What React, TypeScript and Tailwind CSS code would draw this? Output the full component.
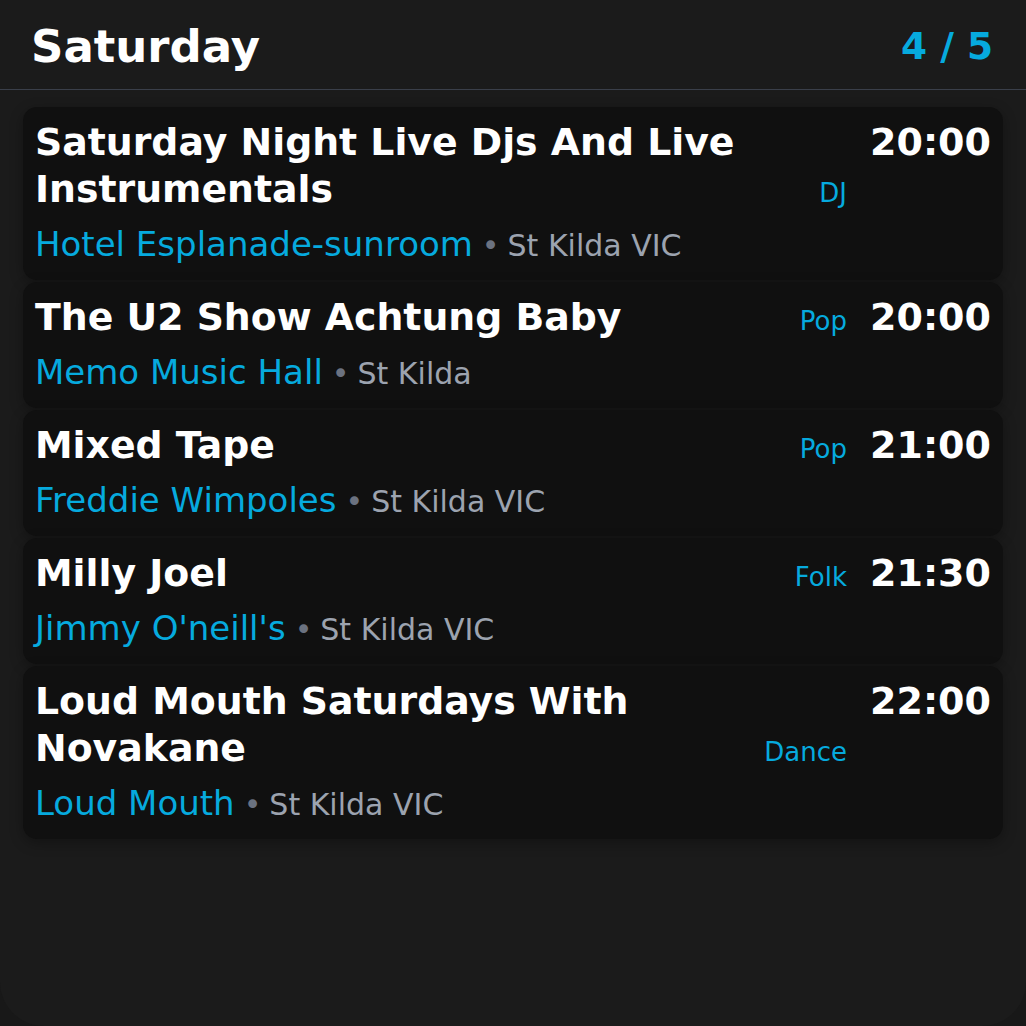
const events = [
  { title: 'Saturday Night Live Djs And Live Instrumentals', venue: 'Hotel Esplanade-sunroom', suburb: 'St Kilda VIC', genre: 'DJ', time: '20:00' },
  { title: 'The U2 Show Achtung Baby', venue: 'Memo Music Hall', suburb: 'St Kilda', genre: 'Pop', time: '20:00' },
  { title: 'Mixed Tape', venue: 'Freddie Wimpoles', suburb: 'St Kilda VIC', genre: 'Pop', time: '21:00' },
  { title: 'Milly Joel', venue: "Jimmy O'neill's", suburb: 'St Kilda VIC', genre: 'Folk', time: '21:30' },
  { title: 'Loud Mouth Saturdays With Novakane', venue: 'Loud Mouth', suburb: 'St Kilda VIC', genre: 'Dance', time: '22:00' },
];

type Gig = (typeof events)[number];

function EventCard({ gig }: { gig: Gig }) {
  return (
    <div className="flex items-start rounded-[14px] bg-[#101010] px-3 pt-3 pb-[14px] shadow-[0_4px_14px_rgba(0,0,0,0.3)]">
      <div className="min-w-0 flex-1">
        <div className="flex items-end gap-4">
          <h3 className="flex-1 text-[37.8px] font-bold leading-[47px] text-white">{gig.title}</h3>
          <span className="text-[26px] leading-[39px] text-[#06aade]">{gig.genre}</span>
        </div>
        <p className="mt-[11px] flex items-baseline whitespace-nowrap leading-[40px]">
          <span className="text-[34px] text-[#06aade]">{gig.venue}</span>
          <span className="ml-[9px] text-[30px] text-[#6b7280]">•</span>
          <span className="ml-[8px] text-[30px] text-[#9ca3af]">{gig.suburb}</span>
        </p>
      </div>
      <div className="ml-[23px] text-[38px] font-bold leading-[47px] text-white">{gig.time}</div>
    </div>
  );
}

export default function App() {
  return (
    <div className="h-[1026px] w-[1026px] bg-[#181818]" style={{ fontFamily: '"DejaVu Sans", sans-serif' }}>
      <div className="flex h-full flex-col overflow-hidden rounded-b-[44px] bg-[#1b1b1b]">
        {/* header */}
        <div className="flex h-[90px] items-center justify-between border-b border-[#3a3f4a] pr-[33px] pl-[31px] pt-[4px]">
          <h1 className="text-[45px] font-bold leading-[54px] text-white">Saturday</h1>
          <span className="text-[37.5px] font-bold text-[#06aade]">4 / 5</span>
        </div>

        {/* list */}
        <div className="flex flex-col gap-[2px] px-[23px] pt-[17px]">
          {events.map((gig) => (
            <EventCard key={gig.title} gig={gig} />
          ))}
        </div>
      </div>
    </div>
  );
}
